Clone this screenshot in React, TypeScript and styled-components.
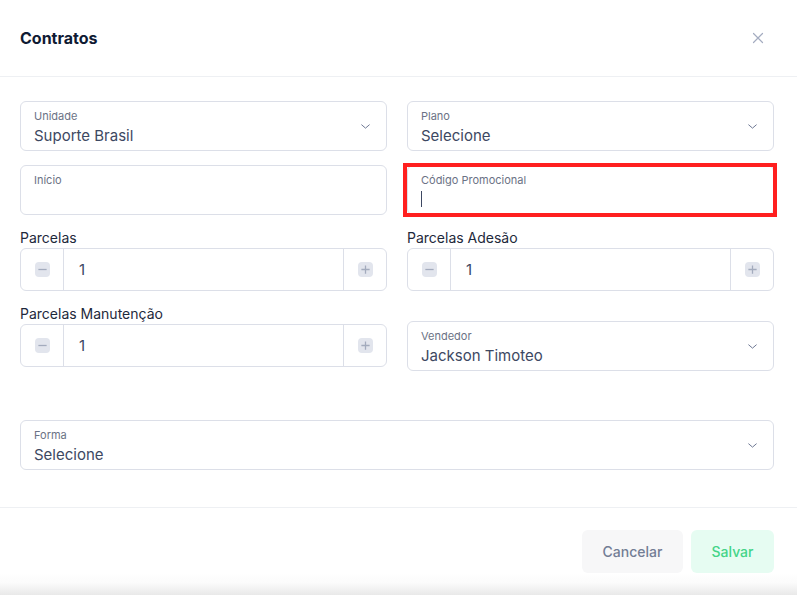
import { createGlobalStyle, styled } from "styled-components";

const GlobalStyle = createGlobalStyle`
  html, body {
    margin: 0;
    padding: 0;
  }
  body {
    font-family: Inter, "Noto Sans", "Liberation Sans", sans-serif;
    background: #ffffff;
    color: #1e293b;
    -webkit-font-smoothing: antialiased;
  }
`;

const Modal = styled.div`
  width: 797px;
  height: 595px;
  overflow: hidden;
  display: flex;
  flex-direction: column;
  background: linear-gradient(to bottom, #ffffff 0, #ffffff 573px, #fbfbfb 583px, #e9e9e9 595px);
`;

const Header = styled.header`
  height: 77px;
  flex: none;
  box-sizing: border-box;
  padding: 0 23px 0 20px;
  display: flex;
  align-items: center;
  justify-content: space-between;
  border-bottom: 1px solid #eef0f3;
`;

const Title = styled.h2`
  margin: 0;
  font-size: 16px;
  font-weight: 700;
  color: #0f1a33;
`;

const CloseButton = styled.button`
  width: 34px;
  height: 34px;
  border: 0;
  padding: 0;
  background: transparent;
  display: flex;
  align-items: center;
  justify-content: center;
  color: #a4acc0;
  margin-right: -1px;
`;

const Body = styled.div`
  padding: 24px 23px 37px 20px;
  border-bottom: 1px solid #eef0f3;
`;

const Grid = styled.div`
  display: grid;
  grid-template-columns: 1fr 1fr;
  column-gap: 20px;
  row-gap: 14px;
`;

const Cell = styled.div<{ $offset?: number; $full?: boolean }>`
  display: flex;
  flex-direction: column;
  margin-top: ${(p) => p.$offset ?? 0}px;
  ${(p) => (p.$full ? "grid-column: 1 / -1;" : "")}
`;

const FieldBox = styled.div<{ $focused?: boolean }>`
  position: relative;
  height: 50px;
  box-sizing: border-box;
  border: 1px solid #dcdfe8;
  border-radius: 6px;
  padding: 7px 40px 0 13px;
  background: #fff;

  ${(p) =>
    p.$focused
      ? `&::after {
    content: "";
    position: absolute;
    top: -3px;
    bottom: -3px;
    left: -5px;
    right: -4px;
    border: 4px solid #ff1f1f;
    pointer-events: none;
  }`
      : ""}
`;

const SmallLabel = styled.div`
  font-size: 11px;
  line-height: 14px;
  color: #6b7285;
`;

const Value = styled.div`
  margin-top: 3px;
  font-size: 15px;
  line-height: 20px;
  color: #3d4862;
  font-weight: 400;
`;

const Caret = styled.div`
  margin-top: 4px;
  width: 1px;
  height: 16px;
  background: #3d4862;
`;

const Chevron = styled.span`
  position: absolute;
  right: 14px;
  top: 18px;
  color: #6b7591;
  display: flex;
`;

const OuterLabel = styled.div`
  font-size: 14px;
  line-height: 17px;
  color: #1e293b;
  margin-bottom: 2px;
`;

const Stepper = styled.div`
  height: 43px;
  box-sizing: border-box;
  border: 1px solid #dcdfe8;
  border-radius: 6px;
  display: flex;
  align-items: stretch;
  background: #fff;
`;

const StepButton = styled.div<{ $side: "left" | "right" }>`
  width: 42px;
  flex: none;
  display: flex;
  align-items: center;
  justify-content: center;
  ${(p) => (p.$side === "left" ? "border-right: 1px solid #dcdfe8;" : "border-left: 1px solid #dcdfe8;")}
`;

const StepIcon = styled.span`
  width: 15px;
  height: 15px;
  border-radius: 4px;
  background: #e2e5ed;
  display: flex;
  align-items: center;
  justify-content: center;
  color: #a3abbd;
`;

const StepValue = styled.div`
  flex: 1;
  display: flex;
  align-items: center;
  padding-left: 15px;
  font-size: 15px;
  color: #3d4862;
`;

const Footer = styled.footer`
  padding: 22px 23px 0 20px;
  display: flex;
  justify-content: flex-end;
  gap: 8px;
`;

const Button = styled.button<{ $variant: "cancel" | "save" }>`
  height: 43px;
  border: 0;
  border-radius: 6px;
  font-family: inherit;
  font-size: 14px;
  font-weight: 500;
  padding: 0 20px;
  background: ${(p) => (p.$variant === "cancel" ? "#f7f7f8" : "#e6fcf2")};
  color: ${(p) => (p.$variant === "cancel" ? "#737d95" : "#44d488")};
  min-width: ${(p) => (p.$variant === "cancel" ? "101px" : "83px")};
`;

function ChevronDown() {
  return (
    <svg width="13" height="13" viewBox="0 0 24 24" fill="none" stroke="currentColor" strokeWidth="1.8" strokeLinecap="round" strokeLinejoin="round">
      <path d="M5 9l7 6 7-6" />
    </svg>
  );
}

function SelectField({ label, value }: { label: string; value?: string }) {
  return (
    <FieldBox>
      <SmallLabel>{label}</SmallLabel>
      <Value>{value}</Value>
      <Chevron>
        <ChevronDown />
      </Chevron>
    </FieldBox>
  );
}

function TextField({ label, focused }: { label: string; focused?: boolean }) {
  return (
    <FieldBox $focused={focused}>
      <SmallLabel>{label}</SmallLabel>
      {focused && <Caret />}
    </FieldBox>
  );
}

function NumberStepper({ label, value }: { label: string; value: number }) {
  return (
    <>
      <OuterLabel>{label}</OuterLabel>
      <Stepper>
        <StepButton $side="left">
          <StepIcon>
            <svg width="11" height="11" viewBox="0 0 12 12" stroke="currentColor" strokeWidth="1.4">
              <path d="M1.5 6h9" />
            </svg>
          </StepIcon>
        </StepButton>
        <StepValue>{value}</StepValue>
        <StepButton $side="right">
          <StepIcon>
            <svg width="11" height="11" viewBox="0 0 12 12" stroke="currentColor" strokeWidth="1.4">
              <path d="M1.5 6h9M6 1.5v9" />
            </svg>
          </StepIcon>
        </StepButton>
      </Stepper>
    </>
  );
}

export default function App() {
  return (
    <>
      <GlobalStyle />
      <Modal>
        <Header>
          <Title>Contratos</Title>
          <CloseButton aria-label="Fechar">
            <svg width="12" height="12" viewBox="0 0 12 12" stroke="currentColor" strokeWidth="1.2" strokeLinecap="round">
              <path d="M1.5 1.5l9 9M10.5 1.5l-9 9" />
            </svg>
          </CloseButton>
        </Header>
        <Body>
          <Grid>
            <Cell>
              <SelectField label="Unidade" value="Suporte Brasil" />
            </Cell>
            <Cell>
              <SelectField label="Plano" value="Selecione" />
            </Cell>
            <Cell>
              <TextField label="Início" />
            </Cell>
            <Cell>
              <TextField label="Código Promocional" focused />
            </Cell>
            <Cell>
              <NumberStepper label="Parcelas" value={1} />
            </Cell>
            <Cell>
              <NumberStepper label="Parcelas Adesão" value={1} />
            </Cell>
            <Cell>
              <NumberStepper label="Parcelas Manutenção" value={1} />
            </Cell>
            <Cell $offset={16}>
              <SelectField label="Vendedor" value="Jackson Timoteo" />
            </Cell>
            <Cell $full $offset={35}>
              <SelectField label="Forma" value="Selecione" />
            </Cell>
          </Grid>
        </Body>
        <Footer>
          <Button $variant="cancel">Cancelar</Button>
          <Button $variant="save">Salvar</Button>
        </Footer>
      </Modal>
    </>
  );
}
